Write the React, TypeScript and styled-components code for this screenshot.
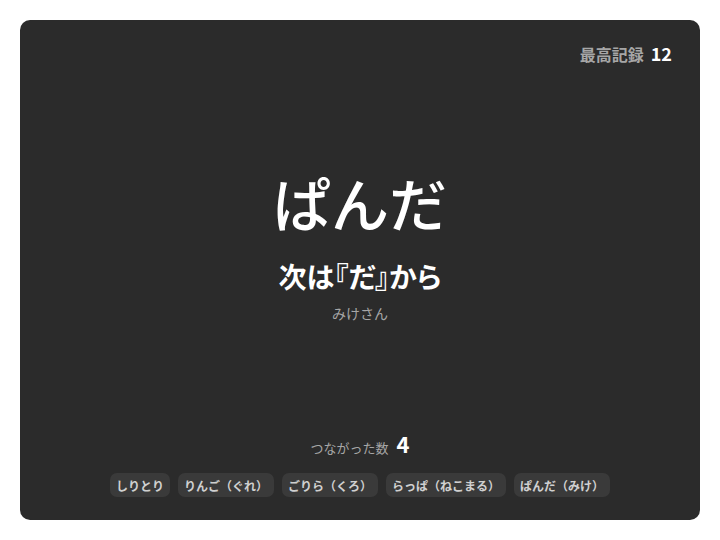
import { FC } from "react"
import styled, { createGlobalStyle } from "styled-components"

const GlobalStyle = createGlobalStyle`
  html, body {
    margin: 0;
    padding: 0;
    background: #ffffff;
    font-family: "Noto Sans CJK JP", "Noto Sans", sans-serif;
  }
`

const history = [
  { word: "しりとり" },
  { word: "りんご", by: "ぐれ" },
  { word: "ごりら", by: "くろ" },
  { word: "らっぱ", by: "ねこまる" },
  { word: "ぱんだ", by: "みけ" },
]

const App: FC = () => {
  return (
    <Page>
      <GlobalStyle />
      <Card>
        <TopBar>
          <RecordLabel>最高記録</RecordLabel>
          <RecordValue>12</RecordValue>
        </TopBar>
        <Main>
          <Word>ぱんだ</Word>
          <NextHint>次は『だ』から</NextHint>
          <Author>みけさん</Author>
        </Main>
        <Footer>
          <Count>
            <CountLabel>つながった数</CountLabel>
            <CountValue>4</CountValue>
          </Count>
          <ChipRow>
            {history.map((h) => (
              <Chip key={h.word}>
                {h.word}
                {h.by ? `（${h.by}）` : ""}
              </Chip>
            ))}
          </ChipRow>
        </Footer>
      </Card>
    </Page>
  )
}

export default App

const Page = styled.div`
  padding: 20px;
  box-sizing: border-box;
  width: 720px;
  height: 540px;
`

const Card = styled.div`
  height: 500px;
  box-sizing: border-box;
  background: #2b2b2b;
  border-radius: 10px;
  padding: 20px 28px 23px;
  display: flex;
  flex-direction: column;
  color: #ffffff;
`

const TopBar = styled.div`
  display: flex;
  justify-content: flex-end;
  align-items: baseline;
  gap: 7px;
`

const RecordLabel = styled.span`
  font-size: 16px;
  font-weight: 700;
  color: #a6a6a6;
`

const RecordValue = styled.span`
  font-size: 18px;
  font-weight: 700;
  color: #ffffff;
`

const Main = styled.div`
  flex: 1;
  display: flex;
  flex-direction: column;
  align-items: center;
  justify-content: center;
  padding-bottom: 8px;
`

const Word = styled.div`
  font-size: 58px;
  font-weight: 500;
  line-height: 70px;
`

const NextHint = styled.div`
  font-size: 28px;
  font-weight: 700;
  line-height: 36px;
  margin-top: 21px;
  font-feature-settings: "palt";
`

const Author = styled.div`
  font-size: 14px;
  line-height: 20px;
  color: #a6a6a6;
  margin-top: 9px;
`

const Footer = styled.div`
  display: flex;
  flex-direction: column;
  align-items: center;
  gap: 13px;
`

const Count = styled.div`
  display: flex;
  align-items: baseline;
  gap: 8px;
  line-height: 24px;
`

const CountLabel = styled.span`
  font-size: 13px;
  color: #a6a6a6;
`

const CountValue = styled.span`
  font-size: 22px;
  font-weight: 700;
  color: #ffffff;
`

const ChipRow = styled.div`
  display: flex;
  gap: 8px;
  justify-content: center;
`

const Chip = styled.div`
  height: 24px;
  display: flex;
  align-items: center;
  padding: 0 6px;
  border-radius: 7px;
  background: #3a3a3a;
  color: #d0d0d0;
  font-size: 12px;
  font-weight: 700;
`
